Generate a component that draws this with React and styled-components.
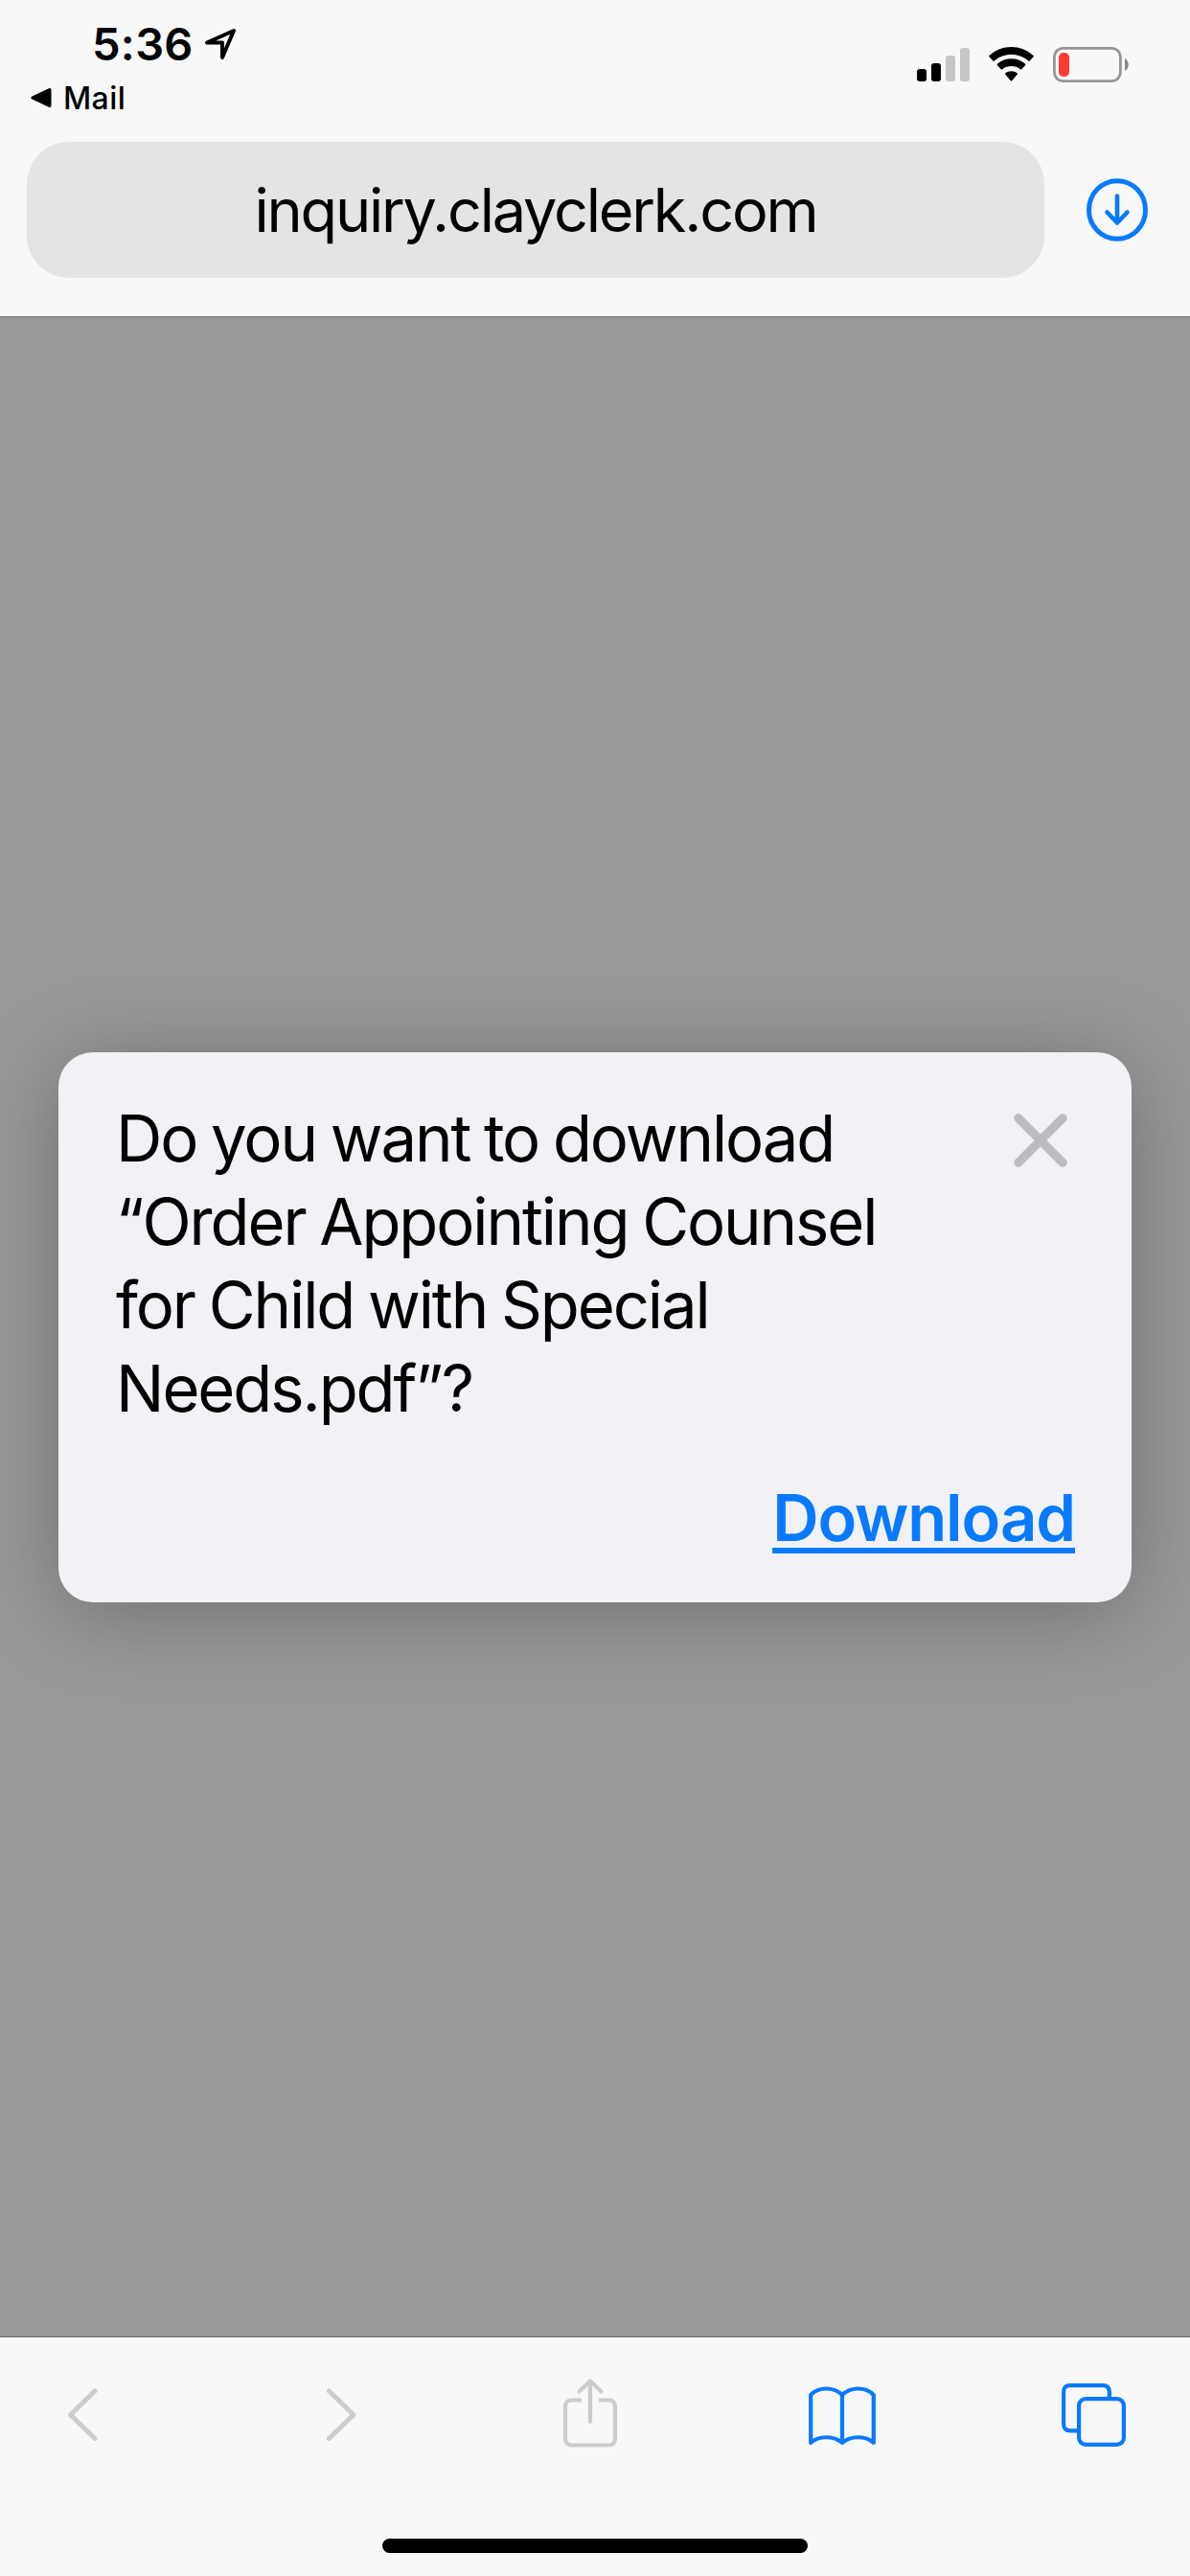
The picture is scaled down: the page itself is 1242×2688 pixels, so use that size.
import styled, { createGlobalStyle } from "styled-components";

const GlobalStyle = createGlobalStyle`
  body {
    margin: 0;
    background-color: #999999;
    color: #000000;
    font-family: Inter, "Liberation Sans", sans-serif;
  }

  svg {
    display: block;
    flex: none;
  }
`;

const Screen = styled.div`
  width: 1242px;
  height: 2688px;
  display: flex;
  flex-direction: column;
  overflow: hidden;
`;

const Header = styled.header`
  box-sizing: border-box;
  height: 331px;
  flex: none;
  background-color: #f8f8f8;
  border-bottom: 1px solid #717171;
`;

const StatusBar = styled.div`
  height: 148px;
  display: flex;
  justify-content: space-between;
`;

const StatusLeft = styled.div`
  display: flex;
  flex-direction: column;
`;

const TimeRow = styled.div`
  display: flex;
  align-items: center;
  gap: 11px;
  height: 60px;
  padding: 16px 0 0 96px;
`;

const Time = styled.span`
  font-size: 47px;
  font-weight: 600;
  line-height: 60px;
  letter-spacing: 0.3px;
`;

const BackLink = styled.div`
  display: flex;
  align-items: center;
  gap: 12px;
  padding-left: 32px;
  height: 52px;
  font-size: 32px;
  font-weight: 500;
  letter-spacing: 0.4px;
`;

const StatusIcons = styled.div`
  display: flex;
  align-items: flex-start;
  gap: 20px;
  padding: 49px 64px 0 0;
`;

const AddressRow = styled.div`
  display: flex;
  align-items: center;
  gap: 44px;
  padding-left: 28px;
`;

const AddressBar = styled.div`
  width: 1062px;
  height: 142px;
  border-radius: 44px;
  background-color: #e4e4e4;
  display: flex;
  align-items: center;
  justify-content: center;
  font-size: 63px;
  letter-spacing: -2.2px;
`;

const Page = styled.main`
  flex: 1;
  display: flex;
  align-items: flex-start;
  justify-content: center;
  padding-top: 767px;
  background-color: #999999;
`;

const Dialog = styled.section`
  box-sizing: border-box;
  width: 1120px;
  height: 574px;
  padding: 46px 59px 0 60px;
  border-radius: 36px;
  background-color: #f2f1f6;
  box-shadow: 0 10px 90px rgba(0, 0, 0, 0.28);
`;

const DialogTop = styled.div`
  display: flex;
  justify-content: space-between;
`;

const Message = styled.p`
  margin: 0;
  width: 860px;
  font-size: 67px;
  line-height: 87px;
  letter-spacing: -2.1px;
  word-spacing: -2px;
  white-space: nowrap;
`;

const CloseButton = styled.div`
  padding: 18px 8px 0 0;
`;

const DialogActions = styled.div`
  display: flex;
  justify-content: flex-end;
  padding-top: 48px;
`;

const DownloadLink = styled.a`
  font-size: 67px;
  font-weight: 600;
  line-height: 87px;
  letter-spacing: -1.1px;
  color: #087aff;
  text-decoration: underline;
  text-decoration-thickness: 6px;
  text-underline-offset: 7px;
  text-decoration-skip-ink: none;
`;

const Footer = styled.footer`
  box-sizing: border-box;
  height: 250px;
  flex: none;
  display: flex;
  flex-direction: column;
  justify-content: space-between;
  align-items: center;
  padding-bottom: 24px;
  border-top: 1px solid #6a6a6a;
  background-color: #f8f8f8;
`;

const Toolbar = styled.nav`
  box-sizing: border-box;
  width: 100%;
  padding: 41px 61px 0 50px;
  display: flex;
  justify-content: space-between;
`;

const ToolbarButton = styled.div`
  width: 76px;
  height: 76px;
  display: flex;
  justify-content: center;
  color: ${({ $disabled }) => ($disabled ? "#cccccc" : "#087aff")};
`;

const HomeIndicator = styled.div`
  width: 444px;
  height: 15px;
  border-radius: 8px;
  background-color: #000000;
`;

function LocationIcon() {
  return (
    <svg width="34" height="34" viewBox="0 0 34 34" fill="none" stroke="#000" strokeWidth="4" strokeLinejoin="round">
      <path d="M3 15.5 31 3 19 31V15.5Z" />
    </svg>
  );
}

function BackTriangle() {
  return (
    <svg width="22" height="22" viewBox="0 0 22 22">
      <path d="M1.5 9.4 19 1.2Q21.5 .2 21.5 3V19Q21.5 21.8 19 20.8L1.5 12.6Q-1 11 1.5 9.4Z" />
    </svg>
  );
}

function SignalIcon() {
  return (
    <svg width="55" height="36" viewBox="0 0 55 36">
      <rect x="0" y="23" width="10" height="13" rx="3" />
      <rect x="15" y="17" width="10" height="19" rx="3" />
      <rect x="30" y="9" width="10" height="27" rx="3" fill="#c6c6c6" />
      <rect x="45" y="1" width="10" height="35" rx="3" fill="#c6c6c6" />
    </svg>
  );
}

function WifiIcon() {
  return (
    <svg width="47" height="36" viewBox="0 0 47 36">
      <path d="M.4 10.2Q-.2 9.6 .5 9C13.5 -3 33.5 -3 46.5 9Q47.2 9.6 46.6 10.2L42.6 14.5Q42 15.1 41.3 14.5C31 5.6 16 5.6 5.7 14.5Q5 15.1 4.4 14.5Z" />
      <path d="M8.8 19Q8.2 18.4 8.9 17.8C17.3 10.5 29.7 10.5 38.1 17.8Q38.8 18.4 38.2 19L34.2 23.2Q33.6 23.8 32.9 23.2C27.5 18.9 19.5 18.9 14.1 23.2Q13.4 23.8 12.8 23.2Z" />
      <path d="M17.1 28.5Q16.5 27.9 17.2 27.4C20.9 24.5 26.1 24.5 29.8 27.4Q30.5 27.9 29.9 28.5L24.1 35.3Q23.5 35.9 22.9 35.3Z" />
    </svg>
  );
}

function BatteryIcon() {
  return (
    <svg width="79" height="37" viewBox="0 0 79 37">
      <rect x="1.4" y="1.4" width="69" height="34.2" rx="9" fill="none" stroke="#959595" strokeWidth="2.8" />
      <rect x="6" y="6" width="11" height="25" rx="5" fill="#ff3b30" />
      <path d="M75 12C80 15 80 22 75 25Z" fill="#878787" />
    </svg>
  );
}

function DownloadIcon() {
  return (
    <svg width="64" height="66" viewBox="0 0 64 66" fill="none" stroke="#087aff" strokeLinecap="round" strokeLinejoin="round">
      <ellipse cx="32" cy="33" rx="29.5" ry="30.3" strokeWidth="5" />
      <path d="M32 18.5V46M21.5 35.5 32 46.5 42.5 35.5" strokeWidth="4.6" />
    </svg>
  );
}

function CloseIcon() {
  return (
    <svg width="56" height="56" viewBox="0 0 56 56" fill="none" stroke="#bcbbc1" strokeWidth="9" strokeLinecap="round">
      <path d="M4.8 4.8 51.2 51.2M51.2 4.8 4.8 51.2" />
    </svg>
  );
}

function ChevronIcon({ d }) {
  return (
    <svg width="48" height="76" viewBox="0 0 48 76" fill="none" stroke="currentColor" strokeWidth="5" strokeLinecap="round" strokeLinejoin="round">
      <path d={d} />
    </svg>
  );
}

function ShareIcon() {
  return (
    <svg width="58" height="76" viewBox="0 0 58 76" fill="none" stroke="currentColor" strokeWidth="4.2" strokeLinecap="round" strokeLinejoin="round">
      <path d="M20 24.5H10Q3 24.5 3 31.5V64.5Q3 71.5 10 71.5H48Q55 71.5 55 64.5V31.5Q55 24.5 48 24.5H38" strokeLinecap="butt" />
      <path d="M29 4.5V47M17.5 15.5 29 4.5 40.5 15.5" />
    </svg>
  );
}

function BookIcon() {
  return (
    <svg width="70" height="76" viewBox="0 0 70 76" fill="none" stroke="currentColor" strokeWidth="4.2" strokeLinecap="round" strokeLinejoin="round">
      <path d="M2.2 19C10.5 10.3 26 10.3 35 19C44 10.3 59.5 10.3 67.8 19V69C59.5 61.3 44 61.3 35 69C26 61.3 10.5 61.3 2.2 69ZM35 19V69" />
    </svg>
  );
}

function TabsIcon() {
  return (
    <svg width="70" height="76" viewBox="0 0 70 76" fill="none" stroke="currentColor" strokeWidth="4.2">
      <path d="M49.9 23V16Q49.9 9.1 43 9.1H9Q2.1 9.1 2.1 16V49.5Q2.1 56.4 9 56.4H17" />
      <rect x="18.1" y="23.1" width="46.8" height="47.8" rx="7" />
    </svg>
  );
}

function App() {
  return (
    <Screen>
      <GlobalStyle />
      <Header>
        <StatusBar>
          <StatusLeft>
            <TimeRow>
              <Time>5:36</Time>
              <LocationIcon />
            </TimeRow>
            <BackLink>
              <BackTriangle />
              Mail
            </BackLink>
          </StatusLeft>
          <StatusIcons>
            <SignalIcon />
            <WifiIcon />
            <BatteryIcon />
          </StatusIcons>
        </StatusBar>
        <AddressRow>
          <AddressBar>inquiry.clayclerk.com</AddressBar>
          <DownloadIcon />
        </AddressRow>
      </Header>
      <Page>
        <Dialog>
          <DialogTop>
            <Message>
              Do you want to download
              <br />
              “Order Appointing Counsel
              <br />
              for Child with Special
              <br />
              Needs.pdf”?
            </Message>
            <CloseButton>
              <CloseIcon />
            </CloseButton>
          </DialogTop>
          <DialogActions>
            <DownloadLink>Download</DownloadLink>
          </DialogActions>
        </Dialog>
      </Page>
      <Footer>
        <Toolbar>
          <ToolbarButton $disabled>
            <ChevronIcon d="M35 15 9.5 39.7 35 64.5" />
          </ToolbarButton>
          <ToolbarButton $disabled>
            <ChevronIcon d="M15.5 15 41 39.7 15.5 64.5" />
          </ToolbarButton>
          <ToolbarButton $disabled>
            <ShareIcon />
          </ToolbarButton>
          <ToolbarButton>
            <BookIcon />
          </ToolbarButton>
          <ToolbarButton>
            <TabsIcon />
          </ToolbarButton>
        </Toolbar>
        <HomeIndicator />
      </Footer>
    </Screen>
  );
}

export default App;
